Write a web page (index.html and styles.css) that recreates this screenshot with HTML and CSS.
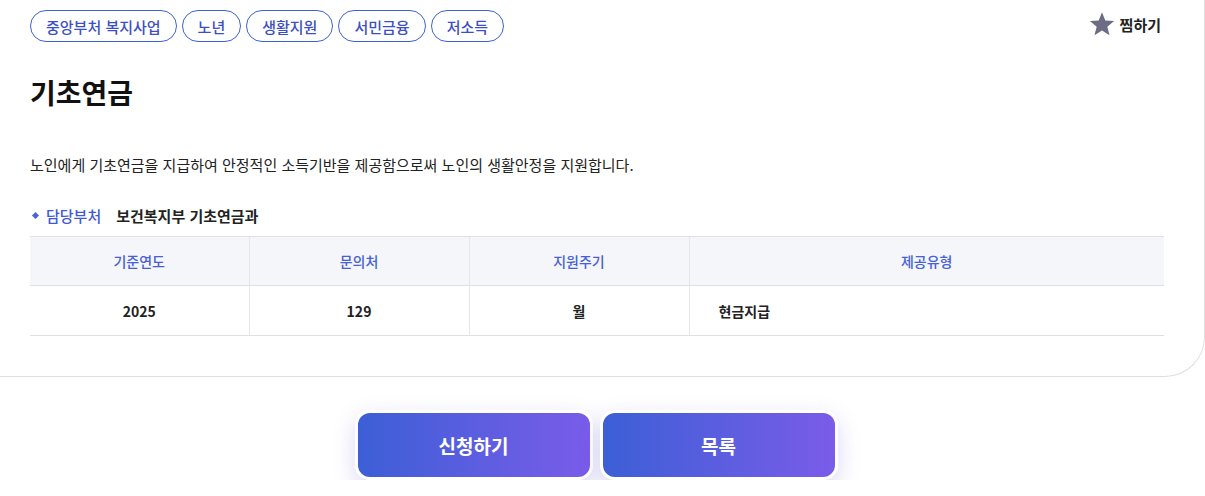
FILE: index.html
```html
<!DOCTYPE html>
<html lang="ko">
<head>
<meta charset="utf-8">
<title>기초연금</title>
<link rel="stylesheet" href="styles.css">
</head>
<body>
<div class="card">
  <div class="top-row">
    <div class="tags">
      <span class="tag">중앙부처 복지사업</span>
      <span class="tag">노년</span>
      <span class="tag">생활지원</span>
      <span class="tag">서민금융</span>
      <span class="tag">저소득</span>
    </div>
    <button class="fav">
      <svg class="star" width="26" height="26" viewBox="0 0 24 24"><path d="M12 1.2l3.05 7.6 8.15.5-6.3 5.2 2.05 7.9L12 18l-6.95 4.4 2.05-7.9-6.3-5.2 8.15-.5z" fill="#6b6d84"/></svg>
      <span>찜하기</span>
    </button>
  </div>
  <h1 class="title">기초연금</h1>
  <p class="desc">노인에게 기초연금을 지급하여 안정적인 소득기반을 제공함으로써 노인의 생활안정을 지원합니다.</p>
  <div class="dept">
    <span class="bullet"></span>
    <span class="dept-label">담당부처</span>
    <span class="dept-value">보건복지부 기초연금과</span>
  </div>
  <table class="info">
    <colgroup>
      <col class="c1"><col class="c2"><col class="c3"><col class="c4">
    </colgroup>
    <thead>
      <tr><th>기준연도</th><th>문의처</th><th>지원주기</th><th>제공유형</th></tr>
    </thead>
    <tbody>
      <tr><td>2025</td><td>129</td><td>월</td><td class="left">현금지급</td></tr>
    </tbody>
  </table>
</div>
<div class="actions">
  <button class="btn">신청하기</button>
  <button class="btn">목록</button>
</div>
</body>
</html>
```
FILE: styles.css
```css
* { box-sizing: border-box; }
html, body { margin: 0; padding: 0; background: #fff; }
body {
  font-family: "Noto Sans CJK KR", "Noto Sans", sans-serif;
  color: #222;
  width: 1205px;
  overflow: hidden;
}
.card {
  width: 1205px;
  padding: 10px 40px 40px 30px;
  border-right: 1px solid #dedede;
  border-bottom: 1px solid #dedede;
  border-bottom-right-radius: 40px;
  background: #fff;
}
.top-row {
  display: flex;
  justify-content: space-between;
  align-items: center;
  height: 32px;
}
.tags { display: flex; gap: 5px; }
.tag {
  display: inline-flex;
  align-items: center;
  justify-content: center;
  height: 32px;
  padding: 0 15px;
  border: 1px solid #3d61d6;
  border-radius: 16px;
  color: #3d4fc4;
  font-size: 15px;
  font-weight: 500;
  white-space: nowrap;
}
.fav {
  display: flex;
  align-items: center;
  gap: 5px;
  background: none;
  border: 0;
  padding: 0;
  margin-right: 3px;
  margin-top: -4px;
  font-family: inherit;
  font-size: 15px;
  font-weight: 700;
  color: #222;
}
.title {
  margin: 32px 0 0;
  font-size: 28px;
  line-height: 36px;
  font-weight: 700;
  color: #111;
}
.desc {
  margin: 45px 0 0;
  font-size: 15px;
  line-height: 20px;
  color: #222;
}
.dept {
  display: flex;
  align-items: center;
  margin-top: 30px;
  height: 20px;
  font-size: 15px;
}
.bullet {
  width: 5px;
  height: 5px;
  background: #4a63d8;
  transform: rotate(45deg);
  margin: 0 8px 0 3px;
}
.dept-label { color: #4058d6; font-weight: 500; margin-right: 15px; }
.dept-value { color: #222; font-weight: 700; }
.info {
  width: 100%;
  margin-top: 11px;
  border-collapse: collapse;
  font-size: 14px;
}
.c1 { width: 219px; }
.c2 { width: 220px; }
.c3 { width: 220px; }
.info th, .info td {
  border-top: 1px solid #e0e0e3;
  border-bottom: 1px solid #e0e0e3;
  border-left: 1px solid #e6e6e8;
  text-align: center;
  padding: 0;
}
.info th:first-child, .info td:first-child { border-left: 0; }
.info th {
  height: 49px;
  background: #f5f6fa;
  color: #4560d8;
  font-weight: 500;
}
.info td {
  height: 50px;
  font-weight: 700;
  color: #222;
}
.info td.left { text-align: left; padding-left: 29px; }
.actions {
  display: flex;
  justify-content: center;
  gap: 7px;
  padding: 33px 13px 0 0;
}
.btn {
  width: 238px;
  height: 70px;
  border: 3px solid #fff;
  border-radius: 15px;
  background: linear-gradient(90deg, #3c5fd6 0%, #7a5ce9 100%);
  color: #fff;
  font-family: inherit;
  font-size: 19px;
  font-weight: 700;
  box-shadow: 0 8px 22px rgba(90, 80, 200, 0.22);
}
```
